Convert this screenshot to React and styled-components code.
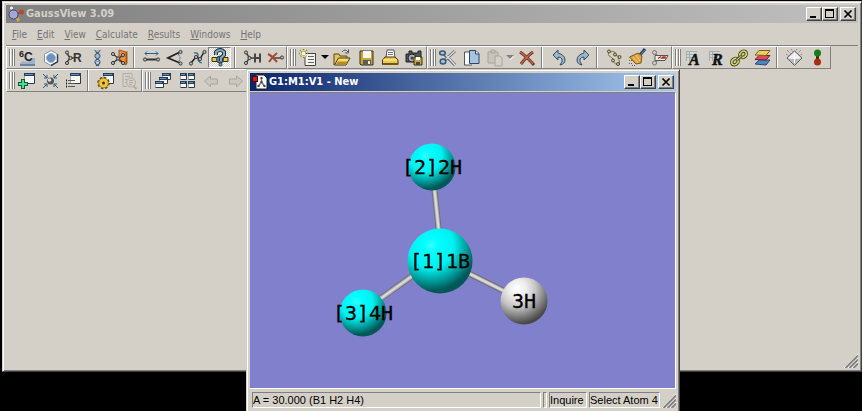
import { Fragment } from 'react';
import styled, { createGlobalStyle, css } from 'styled-components';

const GlobalStyle = createGlobalStyle`
  * {
    box-sizing: border-box;
  }

  body {
    margin: 0;
    background: #000;
    font-family: 'DejaVu Sans Condensed', 'DejaVu Sans', sans-serif;
    font-size: 11px;
  }

  button {
    font: inherit;
    padding: 0;
    border: none;
    background: none;
  }
`;

const raised = css`
  border: 1px solid;
  border-color: #d4d0c8 #404040 #404040 #d4d0c8;
  box-shadow: inset 1px 1px 0 #fff, inset -1px -1px 0 #808080;
`;

const Desktop = styled.div`
  position: relative;
  height: 100vh;
  padding: 1px 0 39px 2px;
  overflow: hidden;
  background: #000;
`;

const MainWindow = styled.main`
  ${raised}
  display: flex;
  flex-direction: column;
  height: 100%;
  padding: 3px;
  background: #d4d0c8;
`;

const ChildWindow = styled.section`
  ${raised}
  position: absolute;
  left: 246px;
  top: 69px;
  width: 434px;
  padding: 3px;
  background: #d4d0c8;
`;

const TitleBar = styled.header`
  display: flex;
  align-items: center;
  height: 18px;
  padding: 0 2px;
  color: ${props => props.$active ? '#fff' : '#d4d0c8'};
  background: ${props => props.$active
    ? 'linear-gradient(90deg, #0a246a, #a6caf0)'
    : 'linear-gradient(90deg, #808080, #c0c0c0)'};
`;

const Title = styled.h1`
  flex: 1;
  margin: 0 0 0 1px;
  font-family: 'DejaVu Sans Condensed', 'DejaVu Sans', sans-serif;
  font-size: 11px;
  line-height: 18px;
  white-space: nowrap;
`;

const WindowButton = styled.button`
  width: 16px;
  height: 14px;
  margin-left: ${props => props.$apart ? '2px' : '0'};
  background: #d4d0c8;
  border: 1px solid;
  border-color: #fff #404040 #404040 #fff;
  box-shadow: inset -1px -1px 0 #808080;

  svg {
    display: block;
  }
`;

const MenuBar = styled.nav`
  display: flex;
  gap: 10px;
  height: 23px;
  padding: 0 6px;
  border-bottom: 1px solid #808080;
`;

const MenuItem = styled.button`
  color: #747474;
  font-size: 10px;
  line-height: 24px;
`;

const ToolbarRow = styled.div`
  display: flex;
  height: 23px;
`;

const Band = styled.div`
  display: flex;
  align-items: center;
  padding: 0 ${props => props.$end || 0}px 0 2px;
  border: 1px solid;
  border-color: #fff #808080 #808080 #fff;
`;

const Grip = styled.span`
  width: 6px;
  height: 17px;
  border: solid #808080;
  border-width: 0 1px;
  background: linear-gradient(90deg, #fff 1px, #d4d0c8 1px 2px, #808080 2px 3px, #fff 3px);
`;

const Divider = styled.span`
  align-self: stretch;
  width: 9px;
  border: solid transparent;
  border-width: 0 4px 0 3px;
  background: linear-gradient(90deg, #808080 1px, #fff 1px) padding-box;
`;

const ToolButton = styled.button`
  display: flex;
  align-items: center;
  justify-content: center;
  width: ${props => props.$width}px;
  height: 21px;

  &[aria-pressed='true'] {
    border: 1px solid;
    border-color: #808080 #fff #fff #808080;
    background: repeating-conic-gradient(#fff 0 25%, #d4d0c8 0 50%) 0 0 / 2px 2px;
  }

  svg {
    flex: none;
  }
`;

const Viewport = styled.div`
  margin-top: 1px;
  border: 1px solid;
  border-color: #808080 #fff #fff #808080;
  border-left: none;
  background: #8080cc;

  svg {
    display: block;
    width: 100%;
  }
`;

const StatusBar = styled.footer`
  display: flex;
  gap: 2px;
  padding: 3px 0 2px 2px;
  font-family: 'Liberation Sans', Arial, sans-serif;
`;

const StatusPanel = styled.span`
  flex: ${props => props.$grow ? '1' : 'none'};
  width: ${props => props.$width}px;
  height: 16px;
  line-height: 15px;
  white-space: nowrap;
  border: 1px solid;
  border-color: #808080 #fff #fff #808080;
`;

const GripCorner = styled.svg`
  align-self: flex-end;
  flex: none;
  margin-top: ${props => props.$push ? 'auto' : '0'};
`;

const Icon = ({ children }) => (
  <svg width="20" height="20" viewBox="0 0 20 20" aria-hidden="true">{children}</svg>
);

const Balls = ({ at, r = 1.6 }) => at.map(([x, y]) => (
  <circle key={`${x},${y}`} cx={x} cy={y} r={r} fill="#b8b8b8" stroke="#3c3c3c" strokeWidth="1" />
));

const Pane = ({ x, y, w = 11, h = 9 }) => (
  <g>
    <rect x={x} y={y} width={w} height={h} fill="#f4f6f8" />
    <path d={`M${x + 0.5} ${y + 3}v${h - 3.5}h${w - 1}`} fill="none" stroke="#a0aab4" />
    <path d={`M${x + w - 0.5} ${y + 3}v${h - 3.5}h${1 - w}`} fill="none" stroke="#303840" />
    <rect x={x} y={y} width={w} height="3" fill="#24405c" />
    <rect x={x + 1} y={y + 1} width={w - 3} height="1" fill="#6c8cac" />
  </g>
);

const icons = {
  element: (
    <>
      <path d="M3 15l3-2 4 1 4-4h4v6H3z" fill="#9db2c8" />
      <path d="M3 17h15" stroke="#6884a4" strokeWidth="2" />
      <text x="2" y="9" fontFamily="Liberation Sans" fontWeight="bold" fontSize="9" fill="#222">6</text>
      <text x="7" y="13" fontFamily="Liberation Sans" fontWeight="bold" fontSize="12" fill="#222">C</text>
    </>
  ),
  ring: (
    <>
      <path d="M11 2.500l6.500 3.700v7.600L11 17.500l-6.500-3.700V6.200z" fill="#fff" stroke="#8494a4" />
      <path d="M11 17.500l6.500-3.700V6.200" fill="none" stroke="#304050" strokeWidth="1.500" />
      <circle cx="11" cy="10" r="4.500" fill="#6d93bc" stroke="#9db8d2" />
    </>
  ),
  rgroup: (
    <>
      <path d="M3.500 4.500L7 10l-3.500 5M7 10h4" fill="none" stroke="#444" strokeWidth="1.500" />
      <Balls at={[[4, 4.500], [4, 15], [7.500, 10]]} />
      <text x="10" y="14" fontFamily="Liberation Sans" fontWeight="bold" fontSize="12" fill="#333">R</text>
    </>
  ),
  helix: (
    <g fill="none" strokeWidth="1.300">
      <path d="M9 2c0 3 5 3 5 6s-5 3-5 6 3 3 4 4" stroke="#24609c" />
      <path d="M14 2c0 3-5 3-5 6s5 3 5 6-3 3-4 4" stroke="#45596c" />
      <path d="M9 3h5M9 8h5M9 13.500h5" stroke="#78a0c8" strokeWidth="1" />
    </g>
  ),
  fragment: (
    <>
      <path d="M10 2l7 2v13l-7-4z" fill="#ec9040" stroke="#a85410" />
      <path d="M17 4l1.500-1v12L17 17z" fill="#a85410" />
      <path d="M4 6l5 4M4 15l5-4 5-4M9 10l5 5" stroke="#333" strokeWidth="1.200" />
      <Balls at={[[4, 6], [4, 15], [9, 10.500], [14, 7], [14, 15]]} />
    </>
  ),
  bond: (
    <>
      <path d="M4 5.500h13M6 3.500l-2 2 2 2M15 3.500l2 2-2 2" fill="none" stroke="#28608c" />
      <path d="M4 11.500h13" stroke="#333" strokeWidth="2" />
      <Balls at={[[4, 11.500], [17, 11.500]]} />
    </>
  ),
  angle: (
    <>
      <path d="M16 4L4 10l12 5" fill="none" stroke="#222" strokeWidth="1.800" />
      <path d="M14 6q4 4 0 8" fill="none" stroke="#28608c" strokeDasharray="2 1" />
      <Balls at={[[16.500, 4], [16.500, 15.500]]} />
    </>
  ),
  dihedral: (
    <>
      <path d="M4 15l5-6 4 2 4-7" fill="none" stroke="#222" strokeWidth="1.500" />
      <path d="M7 5q5-1 4 4t4 6" fill="none" stroke="#28608c" strokeWidth="1.200" />
      <Balls at={[[4, 15.500], [9, 9], [13, 11], [17.500, 4]]} />
    </>
  ),
  inquire: (
    <>
      <path d="M2 9.500h16v4H2z" fill="#e8c848" stroke="#3c3414" />
      <circle cx="10" cy="11.500" r="3.500" fill="#608098" stroke="#203848" />
      <path d="M6 7V4q4-4 8 0v3l-3 3v3" fill="none" stroke="#203848" strokeWidth="4" />
      <path d="M6 7V4q4-4 8 0v3l-3 3v3" fill="none" stroke="#88a4b8" strokeWidth="2" />
      <circle cx="10.500" cy="16.500" r="1.500" fill="#88a4b8" stroke="#203848" />
    </>
  ),
  addValence: (
    <>
      <path d="M4 4.500L7.500 10 4 15M7 10h5" fill="none" stroke="#444" strokeWidth="1.500" />
      <Balls at={[[4, 4.500], [4, 15], [7.500, 10]]} />
      <path d="M13 5.500v9M18 5.500v9M13 10h5" stroke="#444" strokeWidth="2" />
    </>
  ),
  deleteAtom: (
    <>
      <path d="M9 10h8" stroke="#444" strokeWidth="1.500" />
      <path d="M3 6q4 2 9 8M12 5q-4 3-8 9" fill="none" stroke="#a04c34" strokeWidth="2" />
      <Balls at={[[17, 9.500]]} />
    </>
  ),
  newFile: (
    <>
      <path d="M7 5h11v13H7z" fill="#f2f2ee" />
      <path d="M17.500 5v12.500H7V9M7 5.500h10" fill="none" stroke="#444" />
      <path d="M10 8.500h6M10 11.500h6M10 14.500h6" stroke="#666" />
      <path d="M5.500 1v9M1 5.500h9M2 2l7 7M9 2L2 9" stroke="#8a8430" strokeDasharray="1 1" strokeWidth="1.500" />
      <circle cx="5.500" cy="5.500" r="2" fill="#fff9b0" />
    </>
  ),
  open: (
    <>
      <path d="M2 17V6h5l1 2h7v3" fill="#e4c45c" stroke="#5c4410" />
      <path d="M2.500 17l4-7H18l-4 7z" fill="#f4dc70" stroke="#4c380c" />
      <path d="M4 16.500h10l2-3H6z" fill="#b48c20" />
      <path d="M10 4q3-4 6 0M16.500 1.500V5H13" fill="none" stroke="#50565c" />
    </>
  ),
  save: (
    <>
      <path d="M4 3h13v14H5l-1-1z" fill="#c8a43c" stroke="#3c3010" />
      <rect x="7" y="3" width="8" height="7" fill="#f6f6f2" />
      <rect x="7" y="12" width="8" height="5" fill="#5c5c54" />
      <rect x="12" y="13" width="2" height="3" fill="#eee" />
    </>
  ),
  print: (
    <>
      <path d="M7 2h7l1 8H6z" fill="#fff" stroke="#555" />
      <path d="M8 4.500h5M8 6.500h5" stroke="#777" />
      <path d="M2.500 12L5 9h10l3 3v4.500h-15.500z" fill="#ecc84c" stroke="#443410" />
      <path d="M3 12h14" stroke="#fff2a0" />
      <path d="M3 16h15" stroke="#705410" strokeWidth="2" />
    </>
  ),
  camera: (
    <>
      <path d="M2 6h3V3h3v2h6V3h3v11H2z" fill="#50565c" stroke="#222" />
      <circle cx="8" cy="10" r="4" fill="#a4b0bc" stroke="#222" />
      <circle cx="8" cy="10" r="1.500" fill="#34485c" />
      <path d="M10 9h8v8h-8z" fill="#c8a43c" stroke="#3c3010" />
      <path d="M12 9h4v3h-4z" fill="#fff" />
      <path d="M12 14h4v3h-4z" fill="#444" />
    </>
  ),
  cut: (
    <>
      <path d="M17 3L7 12M6 6l11 11" stroke="#5a6068" strokeWidth="3" />
      <path d="M17 3L7 12M7 6l10 11" stroke="#d8dee2" strokeWidth="1.500" />
      <ellipse cx="4.500" cy="5" rx="2.800" ry="2" fill="#a8c0d4" stroke="#34587c" strokeWidth="1.500" />
      <ellipse cx="5" cy="13.500" rx="2.800" ry="2.500" fill="#a8c0d4" stroke="#34587c" strokeWidth="1.500" />
    </>
  ),
  copy: (
    <>
      <path d="M3 4h7v13H3z" fill="#fff" />
      <path d="M3.500 17V4H9M3 17h8" fill="none" stroke="#555" />
      <path d="M8.500 2.500h6l3.500 3v10H8.500z" fill="#a8c4dc" stroke="#28486c" />
      <path d="M14.500 2.500v3.500H18" fill="#e4eef6" stroke="#28486c" />
    </>
  ),
  paste: (
    <g fill="#c8c4bc" stroke="#a8a49c">
      <path d="M4 4h10v11H4z" />
      <path d="M7 2h4v3H7z" />
      <path d="M11 8h5l2 2v8h-7z" fill="#d4d0c8" />
    </g>
  ),
  remove: (
    <>
      <path d="M3 4q6 4 14 13M16 4q-6 4-12 12" fill="none" stroke="#6c301c" strokeWidth="3" />
      <path d="M3 4q6 4 13 12M16 4q-6 4-12 12" fill="none" stroke="#bc6c50" strokeWidth="1.500" />
    </>
  ),
  undo: (
    <path d="M4 7l5-5v3q7 2 7 7 0 4-5 5 3-4 2-6-1-2-4-2v3z" fill="#98b8d0" stroke="#384c60" />
  ),
  redo: (
    <path d="M17 7l-5-5v3q-7 2-7 7 0 4 5 5-3-4-2-6 1-2 4-2v3z" fill="#98b8d0" stroke="#384c60" />
  ),
  clean: (
    <>
      <path d="M6 4q-4 3 1 5l3 3M6 4q6-2 5 3l5 2M9 13q2 4 5 3t0-6" fill="none" stroke="#77776c" />
      {[[5, 3.500], [11, 6.500], [15.500, 9], [9, 12.500], [14, 16]].map(([x, y]) => (
        <circle key={x} cx={x} cy={y} r="1.500" fill="#d4c460" stroke="#504c28" />
      ))}
    </>
  ),
  broom: (
    <>
      <path d="M18 1l-5 6" stroke="#20405c" strokeWidth="3" />
      <path d="M17.500 2l-4 5" stroke="#6c94b4" />
      <path d="M2.500 9l8.500-4 4 3-1 7-5 1z" fill="#d8a440" stroke="#80541c" />
      <path d="M6 9l5 6M9 7l4 6" stroke="#f8d47c" />
      <path d="M2 12.500h3M2 15.500h4M5 17.500h4" stroke="#706048" strokeDasharray="1 1" />
    </>
  ),
  orient: (
    <>
      <path d="M4 5l5 4M4 15l5-4" stroke="#777" strokeWidth="1.500" />
      <path d="M5 7.500h13l-3 5H5z" fill="#eee" stroke="#555" />
      <path d="M8 10.500l3-2M12 10h3v-1h-2z" fill="none" stroke="#b83020" strokeWidth="1.500" />
      <circle cx="4.500" cy="4.500" r="2" fill="#ccc" stroke="#777" />
      <circle cx="4.500" cy="15" r="2" fill="#ccc" stroke="#777" />
    </>
  ),
  link: (
    <g transform="rotate(-42 10 10)" fill="none">
      <ellipse cx="4.500" cy="10" rx="3.500" ry="2.800" stroke="#44441c" strokeWidth="3.500" />
      <ellipse cx="15.500" cy="10" rx="3.500" ry="2.800" stroke="#44441c" strokeWidth="3.500" />
      <ellipse cx="4.500" cy="10" rx="3.500" ry="2.800" stroke="#d4d470" strokeWidth="1.600" />
      <ellipse cx="15.500" cy="10" rx="3.500" ry="2.800" stroke="#d4d470" strokeWidth="1.600" />
      <path d="M7 10h6" stroke="#44441c" strokeWidth="3" />
      <path d="M7 10h6" stroke="#d4d470" />
    </g>
  ),
  layers: (
    <>
      <path d="M3 16l4-4h11l-4 5z" fill="#4c84bc" stroke="#244c7c" />
      <path d="M3 11.500l4-4h11l-4 4.500z" fill="#d84c5c" stroke="#7c1c2c" />
      <path d="M3 7l4-4.500h11L14 7.500z" fill="#f0cc60" stroke="#806020" />
    </>
  ),
  symmetry: (
    <>
      <path d="M3 2l4 4M17 2l-4 4M7 1l2 3M13 1l-2 3M2 6l3 2M18 6l-3 2" stroke="#777" strokeDasharray="1 1" />
      <path d="M10.500 3L18 10l-7.500 7.500L3 10z" fill="#eee" stroke="#555" />
      <path d="M17 10.500l-6.500 6.500L4 10.500z" fill="#b8b8b8" />
      <path d="M10.500 5v10M6 10h9" stroke="#fff" />
    </>
  ),
  traffic: (
    <>
      <path d="M10.500 5v10" stroke="#5c2410" strokeWidth="3" />
      <circle cx="10.500" cy="5" r="3.500" fill="#147c1c" />
      <circle cx="10.500" cy="14" r="3.500" fill="#a42c10" />
    </>
  ),
  addView: (
    <>
      <Pane x={7} y={2} h={11} />
      <path d="M6 8v10M1 13h10" stroke="#145c38" strokeWidth="4" />
      <path d="M6 9v8M2 13h8" stroke="#4cdc94" strokeWidth="2" />
    </>
  ),
  center: (
    <>
      <path d="M3 3l4 4M4 7h3V4M18 3l-4 4M17 7h-3V4M3 17l4-4M4 13h3v3M18 17l-4-4M17 13h-3v3" fill="none" stroke="#2c5c84" />
      <circle cx="10.500" cy="10" r="3.500" fill="#555" />
      <circle cx="9.500" cy="9" r="1.800" fill="#ddd" />
    </>
  ),
  viewList: (
    <>
      <Pane x={7} y={2} h={11} />
      <path d="M3 9.500h1M3 12.500h1M3 15.500h1" stroke="#222" strokeWidth="2" />
      <path d="M5 9.500h7M5 12.500h7M5 15.500h7" stroke="#555" />
    </>
  ),
  calculate: (
    <>
      <Pane x={8} y={2} h={11} />
      <circle cx="8.500" cy="12" r="5" fill="#d8b430" stroke="#5c4408" strokeWidth="2.500" strokeDasharray="2.200 1.700" />
      <circle cx="8.500" cy="12" r="4.800" fill="#ecc83c" stroke="#a07c18" />
      <circle cx="8.500" cy="12" r="1.500" fill="#44300c" />
    </>
  ),
  results: (
    <g fill="none" stroke="#b0aca4">
      <path d="M5 2.500h9v4M5 2.500v13h4M7 5.500h5M7 8.500h2M7 11.500h2" />
      <circle cx="13" cy="11.500" r="4.500" />
      <path d="M11 11.500h4M11 9.500h4M11 13.500h3" />
      <path d="M15.500 15l3 3" strokeWidth="2" />
    </g>
  ),
  cascade: (
    <>
      <Pane x={9} y={2} w={9} h={7} />
      <Pane x={6} y={6} w={9} h={7} />
      <Pane x={2} y={10} w={9} h={7} />
    </>
  ),
  tile: (
    <>
      <Pane x={3} y={2} w={7} h={7} />
      <Pane x={11} y={2} w={7} h={7} />
      <Pane x={3} y={10} w={7} h={7} />
      <Pane x={11} y={10} w={7} h={7} />
    </>
  ),
  back: (
    <path d="M3.500 10l6-5v3h7v5h-7v3z" fill="#ccc8c0" stroke="#aaa69e" />
  ),
  forward: (
    <path d="M17.500 10l-6-5v3h-7v5h7v3z" fill="#ccc8c0" stroke="#aaa69e" />
  ),
  atomList: (
    <>
      <path d="M3 3h10v10H3z" fill="#d0d8dc" />
      <path d="M3 3.500h11M3 6.500h10M3 9.500h8M6.500 3v10M3.500 3v10" stroke="#a0acb4" />
      <text x="6" y="17" fontFamily="Liberation Serif" fontWeight="bold" fontStyle="italic" fontSize="16" fill="#111" stroke="#111" strokeWidth=".5">A</text>
    </>
  ),
  redundant: (
    <>
      <path d="M3 3h10v10H3z" fill="#d0d8dc" />
      <path d="M3 3.500h11M3 6.500h10M3 9.500h8M6.500 3v10M3.500 3v10" stroke="#a0acb4" />
      <text x="6" y="17" fontFamily="Liberation Serif" fontWeight="bold" fontStyle="italic" fontSize="16" fill="#111" stroke="#111" strokeWidth=".5">R</text>
    </>
  ),
};

const rows = [
  [
    {
      width: 23,
      groups: [
        ['element', 'ring', 'rgroup', 'helix', 'fragment'],
        ['bond', 'angle', 'dihedral', 'inquire'],
        ['addValence', 'deleteAtom'],
      ],
    },
    { width: 24, groups: [['newFile', 'menu', 'open', 'save', 'print', 'camera']] },
    {
      width: 23,
      groups: [
        ['cut', 'copy', 'paste', 'menuOff', 'remove'],
        ['undo', 'redo'],
        ['clean', 'broom', 'orient'],
      ],
    },
    {
      width: 23,
      end: 2,
      groups: [
        ['atomList', 'redundant', 'link', 'layers'],
        ['symmetry', 'traffic'],
      ],
    },
  ],
  [
    {
      width: 23,
      end: 2,
      groups: [
        ['addView', 'center', 'viewList'],
        ['calculate', 'results'],
      ],
    },
    { width: 24, groups: [['cascade', 'tile', 'back', 'forward']] },
  ],
];

const Tool = ({ name, width }) => {
  if (name.startsWith('menu')) {
    return (
      <ToolButton type="button" aria-label="More" $width={10} disabled={name === 'menuOff'}>
        <svg width="8" height="5" viewBox="0 0 8 5">
          {name === 'menuOff' && <path d="M1 1h7L4.500 5z" fill="#fff" />}
          <path d="M0 0h8L4 4z" fill={name === 'menuOff' ? '#808080' : '#000'} />
        </svg>
      </ToolButton>
    );
  }
  return (
    <ToolButton
      type="button"
      aria-label={name}
      aria-pressed={name === 'inquire' ? true : undefined}
      $width={width}
    >
      <Icon>{icons[name]}</Icon>
    </ToolButton>
  );
};

const WindowControls = () => (
  <>
    <WindowButton type="button" aria-label="Minimize">
      <svg width="14" height="12"><path d="M3 8h6v2H3z" /></svg>
    </WindowButton>
    <WindowButton type="button" aria-label="Maximize">
      <svg width="14" height="12"><path d="M2 1h9v9H2zM3 3v6h7V3z" fillRule="evenodd" /></svg>
    </WindowButton>
    <WindowButton type="button" aria-label="Close" $apart>
      <svg width="14" height="12">
        <path d="M3.500 2.500l7 7M10.500 2.500l-7 7" stroke="#000" strokeWidth="1.700" />
      </svg>
    </WindowButton>
  </>
);

const SizeGrip = ({ push }) => (
  <GripCorner width="14" height="14" viewBox="0 0 14 14" $push={push} aria-hidden="true">
    <path d="M0 14L14 0M4 14L14 4M8 14l6-6" stroke="#fff" />
    <path d="M1.500 14L14 1.500M5.500 14L14 5.500M9.500 14L14 9.500" stroke="#808080" strokeWidth="1.800" />
  </GripCorner>
);

const atoms = [
  { x: 182, y: 74, r: 23.500, label: '[2]2H', fill: 'url(#cyan)' },
  { x: 190, y: 168, r: 32.500, label: '[1]1B', fill: 'url(#cyan)' },
  { x: 274, y: 208, r: 23.500, label: '3H', fill: 'url(#white)' },
  { x: 113, y: 220, r: 23.500, label: '[3]4H', fill: 'url(#cyan)' },
];

const bonds = [
  [184, 92, 189, 140],
  [165, 181, 130, 206],
  [216, 179, 254, 198],
];

const Molecule = () => (
  <svg viewBox="0 0 425 295" role="img" aria-label="Molecule">
    <defs>
      <radialGradient id="cyan" cx=".36" cy=".26" r=".76">
        <stop offset="0" stopColor="#38ffff" />
        <stop offset=".15" stopColor="#00ffff" />
        <stop offset=".46" stopColor="#00f0f0" />
        <stop offset=".72" stopColor="#009c9c" />
        <stop offset=".92" stopColor="#005858" />
      </radialGradient>
      <radialGradient id="white" cx=".36" cy=".24" r=".78">
        <stop offset="0" stopColor="#fff" />
        <stop offset=".25" stopColor="#ececec" />
        <stop offset=".5" stopColor="#c4c4c4" />
        <stop offset=".75" stopColor="#808080" />
        <stop offset=".96" stopColor="#484848" />
      </radialGradient>
    </defs>
    {bonds.map(([x1, y1, x2, y2]) => (
      <g key={x1}>
        <line x1={x1} y1={y1} x2={x2} y2={y2} stroke="#707074" strokeWidth="6" />
        <line x1={x1} y1={y1} x2={x2} y2={y2} stroke="#b0b0b0" strokeWidth="4" />
        <line x1={x1} y1={y1} x2={x2} y2={y2} stroke="#dcdcdc" strokeWidth="2" />
      </g>
    ))}
    {atoms.map(({ x, y, r, label, fill }) => (
      <g key={label}>
        <circle cx={x} cy={y} r={r} fill={fill} />
        <text
          x={x}
          y={y + 7}
          textAnchor="middle"
          fontFamily="'DejaVu Sans Mono', monospace"
          fontSize="20"
          stroke="#000"
          strokeWidth=".3"
        >
          {label}
        </text>
      </g>
    ))}
  </svg>
);

const menus = ['File', 'Edit', 'View', 'Calculate', 'Results', 'Windows', 'Help'];

export default function App() {
  return (
    <Desktop>
      <GlobalStyle />
      <MainWindow>
        <TitleBar>
          <svg width="17" height="16" viewBox="0 0 17 16" aria-hidden="true">
            <path d="M4 3l2 4M9 8l4-2M9 11l3 4" stroke="#444" />
            <path d="M9 12l2 3" stroke="#d8a840" strokeWidth="3" />
            <circle cx="5.500" cy="8.500" r="4.500" fill="#a4a8d4" stroke="#40487c" />
            <circle cx="3.500" cy="2" r="1.600" fill="#eee" />
            <circle cx="13.500" cy="6" r="2.500" fill="#c04820" />
          </svg>
          <Title>GaussView 3.09</Title>
          <WindowControls />
        </TitleBar>
        <MenuBar>
          {menus.map(name => (
            <MenuItem type="button" key={name}>
              <u>{name[0]}</u>{name.slice(1)}
            </MenuItem>
          ))}
        </MenuBar>
        {rows.map((bands, row) => (
          <ToolbarRow key={row}>
            {bands.map(({ width, end, groups }, i) => (
              <Band key={i} $end={end} role="toolbar">
                <Grip />
                {groups.map((names, g) => (
                  <Fragment key={g}>
                    {g > 0 && <Divider />}
                    {names.map(name => <Tool key={name} name={name} width={width} />)}
                  </Fragment>
                ))}
              </Band>
            ))}
          </ToolbarRow>
        ))}
        <SizeGrip push />
      </MainWindow>

      <ChildWindow>
        <TitleBar $active>
          <svg width="16" height="16" viewBox="0 0 16 16" aria-hidden="true">
            <path d="M4 1h8l3 3v11H4z" fill="#fff" stroke="#222" />
            <path d="M9.500 4v4L6.500 12M9.500 8l3 4" fill="none" stroke="#777" strokeWidth="1.500" />
            <path d="M8.500 3h2v2h-2zM5.500 11h2v2h-2zM11.500 11h2v2h-2zM8.500 7h2v2h-2z" fill="#444" />
            <rect x="0.500" y="2.500" width="5" height="5" fill="#d01818" stroke="#600" />
          </svg>
          <Title as="h2">G1:M1:V1 - New</Title>
          <WindowControls />
        </TitleBar>
        <Viewport>
          <Molecule />
        </Viewport>
        <StatusBar>
          <StatusPanel $grow>A = 30.000 (B1 H2 H4)</StatusPanel>
          <StatusPanel $width={4} />
          <StatusPanel $width={38}>Inquire</StatusPanel>
          <StatusPanel $width={71}>Select Atom 4</StatusPanel>
          <SizeGrip />
        </StatusBar>
      </ChildWindow>
    </Desktop>
  );
}
